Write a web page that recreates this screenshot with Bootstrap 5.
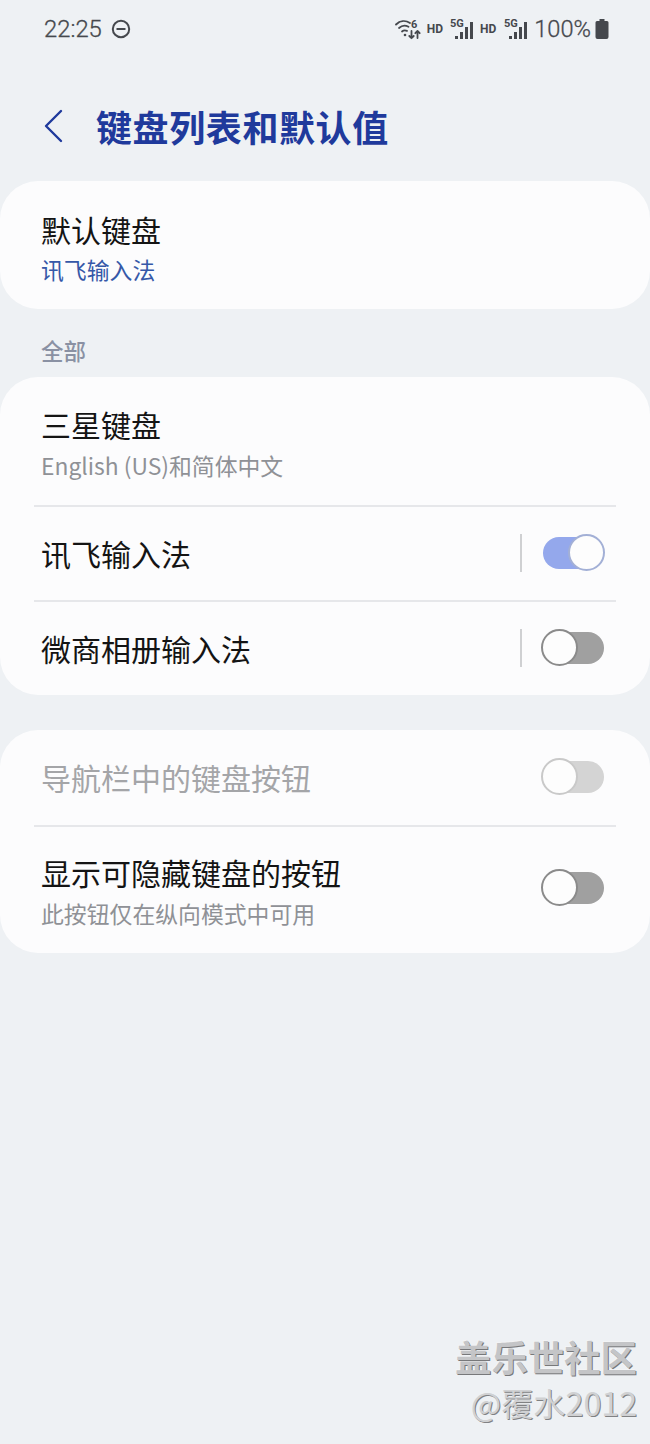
<!doctype html>
<html lang="zh-CN">
<head>
<meta charset="utf-8">
<title>键盘列表和默认值</title>
<link href="https://cdn.jsdelivr.net/npm/bootstrap@5.3.0/dist/css/bootstrap.min.css" rel="stylesheet">
<style>
html,body{margin:0;background:#eef1f4}
body{font-family:"Noto Sans CJK SC","Noto Sans",sans-serif;color:#111}
.phone{position:relative;width:650px;height:1444px;overflow:hidden;background:#eef1f4}
.sbar{height:58px;padding:0 41px 0 44px;color:#45484d;font-family:Roboto,sans-serif}
.sb-time{font-size:23.8px;line-height:58px;font-weight:300;-webkit-text-stroke:.3px #45484d}
.sb-left{gap:9px}
.sb-tag{font:700 12px/1 Roboto,sans-serif;color:#45484d}
.sb-pct{font-size:23.6px;line-height:58px;font-weight:300;-webkit-text-stroke:.3px #45484d;margin-left:6px}
.gap-wifi{margin-left:5px}
.gap-sig{margin-left:7px}
.gap-sig2{margin-left:8px}
.gap-hd{margin-left:6px}
.hdr{height:123px;padding:12px 0 0 44px}
.hdr-title{font-size:36px;line-height:56px;font-weight:700;color:#1f3a9c;margin:0 0 0 32px;letter-spacing:.6px}
.panel{background:#fcfcfd;border-radius:38px}
.sect{font-size:22.5px;line-height:30px;font-weight:500;color:#8a91a3;padding:26px 41px 12px}
.item{padding:0 46px 0 41px}
.item-t{font-size:30px;line-height:40px;color:#141414}
.item-s{font-size:22.85px;line-height:34px;margin-top:3px;color:#8f9196}
.item-s.on{color:#3558a8}
.item-t.dim{color:#a4a5a8}
.sep{height:2px;margin:0 34px;background:#e6e7ea}
.vbar{width:2px;height:38px;background:#cfd0d2;margin-right:21px}
.tgl{position:relative;width:61px;height:32px;border-radius:16px;background:#a0a0a0;flex:none}
.tgl::after{content:"";position:absolute;top:-3px;left:-2px;width:37px;height:37px;border-radius:50%;background:#fdfdfd;border:2px solid #8b8b8b}
.tgl.act{background:#94a8ec}
.tgl.act::after{left:25px;border-color:#a3b0d6}
.tgl.off{background:#d4d4d4}
.tgl.off::after{border-color:#c9c9c9}
.r1{height:128px;padding-top:28px}
.r2{height:128px;padding-top:27px}
.r2 .item-s{margin-top:4px}
.r3{height:93px;padding-bottom:2px}
.r4{height:95px;padding-bottom:2px}
.r5{height:126px;padding-bottom:4px}
.r5-txt{padding-top:25px}
.r5-txt .item-s{margin-top:4px}
.panel-gap{margin-top:35px}
.wm{position:absolute;right:13px;top:1333px;text-align:right}
.wm-a{font-size:36.4px;line-height:46px;font-weight:700;color:#c4c5c7;text-shadow:1px 1px 0 #77787a,-1px -1px 0 #f3f4f5}
.wm-b{font-size:32.2px;line-height:46px;color:#d0d1d3;text-shadow:1px 1px 0 #808183}
</style>
</head>
<body>
<div class="phone">
  <div class="sbar d-flex align-items-center justify-content-between">
    <div class="d-flex align-items-center sb-left">
      <span class="sb-time">22:25</span>
      <svg width="20" height="20" viewBox="0 0 20 20" fill="none" stroke="#45484d" stroke-width="2"><circle cx="10" cy="10" r="8.2"/><path d="M5.500 10h9"/></svg>
    </div>
    <div class="d-flex align-items-center">
      <svg width="27" height="24" viewBox="0 0 27 24" fill="none" stroke="#45484d" stroke-width="1.800" stroke-linecap="round" stroke-linejoin="round">
        <path d="M1 7.500C5 3.500 10.500 3 15 6"/><path d="M4 11c3-2.800 6.500-3 9.500-1.200"/><path d="M7 14.500c1.500-1.300 3.300-1.400 5-.6"/><circle cx="10" cy="18" r="1.300" fill="#45484d" stroke="none"/>
        <path d="M16.500 14v7M14.300 19l2.200 2.200 2.200-2.200M22.500 21v-7M20.300 16.200l2.200-2.200 2.200 2.200"/>
        <text x="16" y="11" font-family="Roboto,sans-serif" font-weight="700" font-size="11" fill="#45484d" stroke="none">6</text>
      </svg>
      <span class="sb-tag gap-wifi">HD</span>
      <svg class="gap-sig" width="24" height="24" viewBox="0 0 24 24" fill="#45484d"><rect x="5" y="19" width="3" height="3"/><rect x="10" y="15" width="3" height="7"/><rect x="15" y="10" width="3" height="12"/><rect x="20" y="5" width="3" height="17"/><text x="0" y="10" font-family="Roboto,sans-serif" font-weight="700" font-size="11">5G</text></svg>
      <span class="sb-tag gap-hd">HD</span>
      <svg class="gap-sig2" width="24" height="24" viewBox="0 0 24 24" fill="#45484d"><rect x="5" y="19" width="3" height="3"/><rect x="10" y="15" width="3" height="7"/><rect x="15" y="10" width="3" height="12"/><rect x="20" y="5" width="3" height="17"/><text x="0" y="10" font-family="Roboto,sans-serif" font-weight="700" font-size="11">5G</text></svg>
      <span class="sb-pct">100%</span>
      <svg class="ms-1" width="14" height="20" viewBox="0 0 14 20" fill="#45484d"><path d="M4.500 0h5v2h2.500a1.500 1.500 0 0 1 1.500 1.500V18a2 2 0 0 1-2 2H2.500a2 2 0 0 1-2-2V3.500A1.500 1.500 0 0 1 2 2h2.500z"/></svg>
    </div>
  </div>

  <div class="hdr d-flex align-items-center">
    <svg width="20" height="34" viewBox="0 0 20 34" fill="none" stroke="#1f3a9c" stroke-width="2.400" stroke-linecap="round" stroke-linejoin="round"><path d="M17 2 2 17l15 15"/></svg>
    <h1 class="hdr-title">键盘列表和默认值</h1>
  </div>

  <div class="panel item r1">
    <div class="item-t">默认键盘</div>
    <div class="item-s on">讯飞输入法</div>
  </div>

  <div class="sect">全部</div>

  <div class="panel">
    <div class="item r2">
      <div class="item-t">三星键盘</div>
      <div class="item-s">English (US)和简体中文</div>
    </div>
    <div class="sep"></div>
    <div class="item r3 d-flex align-items-center">
      <div class="item-t flex-grow-1">讯飞输入法</div>
      <div class="vbar"></div>
      <div class="tgl act"></div>
    </div>
    <div class="sep"></div>
    <div class="item r3 d-flex align-items-center">
      <div class="item-t flex-grow-1">微商相册输入法</div>
      <div class="vbar"></div>
      <div class="tgl"></div>
    </div>
  </div>

  <div class="panel panel-gap">
    <div class="item r4 d-flex align-items-center">
      <div class="item-t flex-grow-1 dim">导航栏中的键盘按钮</div>
      <div class="tgl off"></div>
    </div>
    <div class="sep"></div>
    <div class="item r5 d-flex align-items-start">
      <div class="flex-grow-1 r5-txt">
        <div class="item-t">显示可隐藏键盘的按钮</div>
        <div class="item-s">此按钮仅在纵向模式中可用</div>
      </div>
      <div class="tgl align-self-center"></div>
    </div>
  </div>

  <div class="wm">
    <div class="wm-a">盖乐世社区</div>
    <div class="wm-b">@覆水2012</div>
  </div>
</div>
</body>
</html>
